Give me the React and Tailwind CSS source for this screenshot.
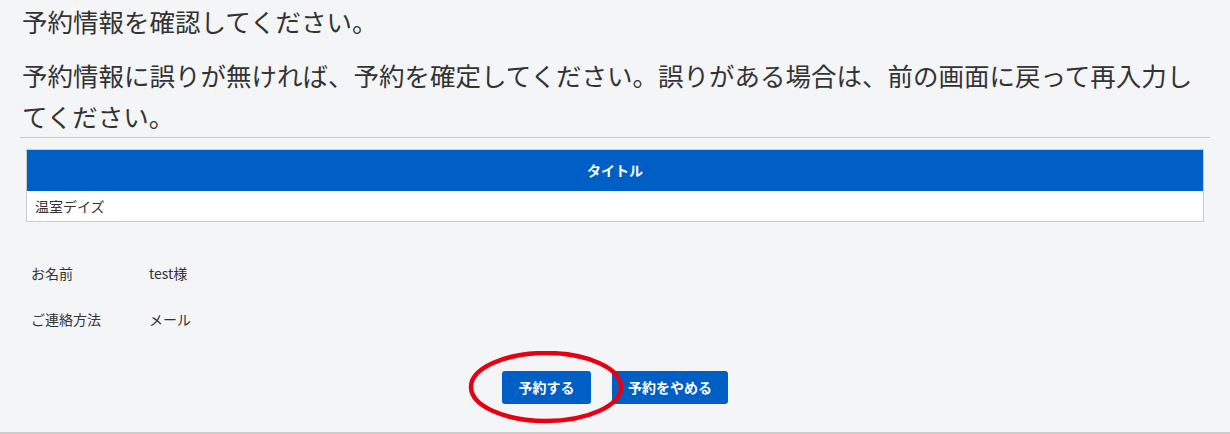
export default function App() {
  const font = { fontFamily: '"Noto Sans CJK JP", "Noto Sans", sans-serif' };
  return (
    <div className="relative w-[1230px] h-[434px] bg-[#f4f5f7] text-[#333] overflow-hidden" style={font}>
      <div className="pl-[22px] pr-[20px] text-[25.5px] leading-[41px]">
        <p className="mb-[13px]">予約情報を確認してください。</p>
        <p>予約情報に誤りが無ければ、予約を確定してください。誤りがある場合は、前の画面に戻って再入力してください。</p>
      </div>
      <div className="mx-[20px] mt-px h-px bg-[#cccccc]" />
      <div className="mx-[26px] mt-[11px] border border-[#cccccc] bg-white">
        <div className="h-[41px] bg-[#005fc5] flex items-center justify-center text-white font-bold text-[14px]">
          タイトル
        </div>
        <div className="h-[30px] flex items-center px-[8px] text-[14px]">温室デイズ</div>
      </div>
      <div className="mt-[41px] pl-[31px] text-[14px] flex flex-col gap-[26px]">
        <div className="flex h-[20px] items-center">
          <span className="w-[118px]">お名前</span>
          <span>test様</span>
        </div>
        <div className="flex h-[20px] items-center">
          <span className="w-[118px]">ご連絡方法</span>
          <span>メール</span>
        </div>
      </div>
      <div className="relative mt-[42px] flex justify-center gap-[21px]">
        <button className="w-[89px] h-[33px] rounded-[3px] bg-[#005fc5] text-white font-bold text-[14px]">予約する</button>
        <button className="w-[116px] h-[33px] rounded-[3px] bg-[#005fc5] text-white font-bold text-[14px]">予約をやめる</button>
        <svg className="absolute left-[467px] top-[-20px]" width="158" height="74" viewBox="0 0 158 74">
          <ellipse cx="79" cy="36" rx="75" ry="34" fill="none" stroke="#e60012" strokeWidth="4.5" />
        </svg>
      </div>
      <div className="absolute left-0 right-0 bottom-0 h-[2px] bg-[#cccccc]" />
    </div>
  );
}
